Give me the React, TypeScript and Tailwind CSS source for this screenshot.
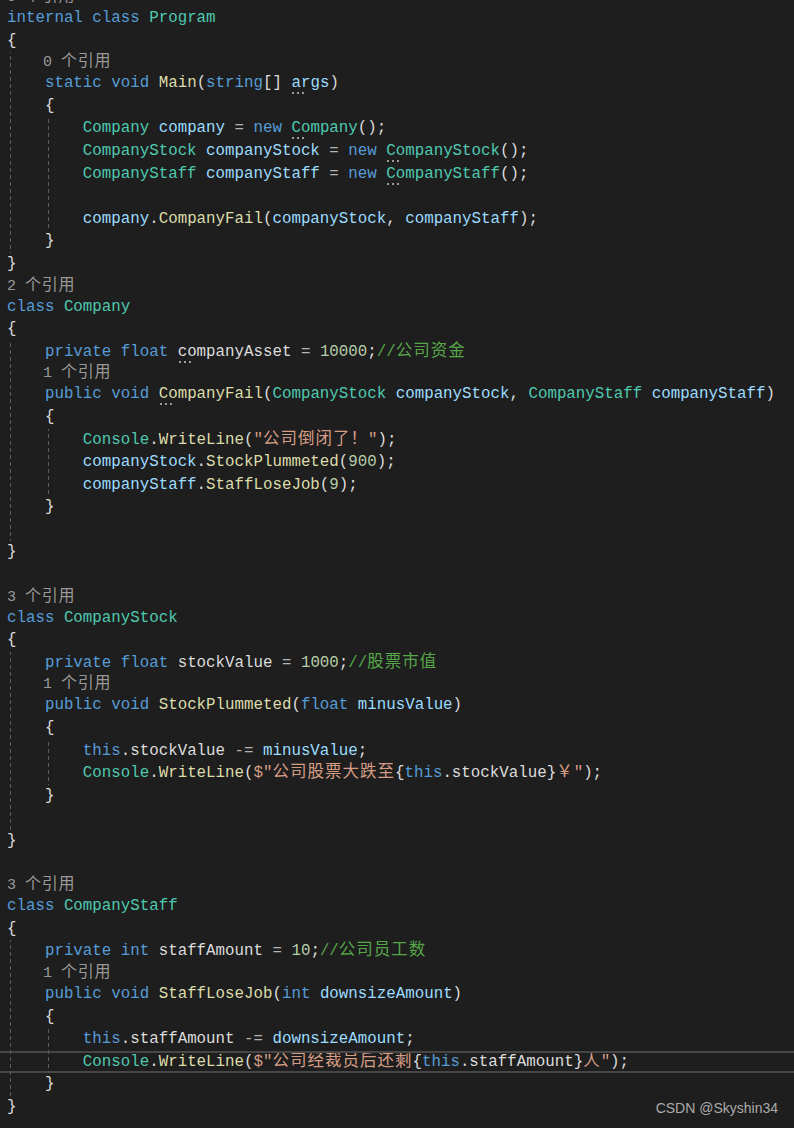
type Tok = [string, string, boolean?];

type Line = {
  lens?: string;
  g: number;
  t?: Tok[];
  hl?: boolean;
};

const color: Record<string, string> = {
  kw: "text-[#569cd6]",
  ty: "text-[#4ec9b0]",
  fn: "text-[#dcdcaa]",
  vr: "text-[#9cdcfe]",
  fd: "text-[#dcdcdc]",
  p: "text-[#dcdcdc]",
  op: "text-[#b4b4b4]",
  num: "text-[#b5cea8]",
  str: "text-[#d69d85]",
  cm: "text-[#57a64a]",
};

const guidePos = ["left-[10px]", "left-[48px]"];

const I1 = "    ";
const I2 = "        ";

const lines: Line[] = [
  { lens: "0 个引用", g: 0 },
  { g: 0, t: [["kw", "internal"], ["p", " "], ["kw", "class"], ["p", " "], ["ty", "Program"]] },
  { g: 0, t: [["p", "{"]] },
  { lens: I1 + "0 个引用", g: 1 },
  {
    g: 1,
    t: [["p", I1], ["kw", "static"], ["p", " "], ["kw", "void"], ["p", " "], ["fn", "Main"], ["p", "("], ["kw", "string"], ["p", "[] "], ["vr", "args", true], ["p", ")"]],
  },
  { g: 1, t: [["p", I1 + "{"]] },
  {
    g: 2,
    t: [["p", I2], ["ty", "Company"], ["p", " "], ["vr", "company"], ["op", " = "], ["kw", "new"], ["p", " "], ["ty", "Company", true], ["p", "();"]],
  },
  {
    g: 2,
    t: [["p", I2], ["ty", "CompanyStock"], ["p", " "], ["vr", "companyStock"], ["op", " = "], ["kw", "new"], ["p", " "], ["ty", "CompanyStock", true], ["p", "();"]],
  },
  {
    g: 2,
    t: [["p", I2], ["ty", "CompanyStaff"], ["p", " "], ["vr", "companyStaff"], ["op", " = "], ["kw", "new"], ["p", " "], ["ty", "CompanyStaff", true], ["p", "();"]],
  },
  { g: 2 },
  {
    g: 2,
    t: [["p", I2], ["vr", "company"], ["p", "."], ["fn", "CompanyFail"], ["p", "("], ["vr", "companyStock"], ["p", ", "], ["vr", "companyStaff"], ["p", ");"]],
  },
  { g: 1, t: [["p", I1 + "}"]] },
  { g: 0, t: [["p", "}"]] },
  { lens: "2 个引用", g: 0 },
  { g: 0, t: [["kw", "class"], ["p", " "], ["ty", "Company"]] },
  { g: 0, t: [["p", "{"]] },
  {
    g: 1,
    t: [["p", I1], ["kw", "private"], ["p", " "], ["kw", "float"], ["p", " "], ["fd", "companyAsset", true], ["op", " = "], ["num", "10000"], ["p", ";"], ["cm", "//公司资金"]],
  },
  { lens: I1 + "1 个引用", g: 1 },
  {
    g: 1,
    t: [
      ["p", I1], ["kw", "public"], ["p", " "], ["kw", "void"], ["p", " "], ["fn", "CompanyFail", true], ["p", "("],
      ["ty", "CompanyStock"], ["p", " "], ["vr", "companyStock"], ["p", ", "], ["ty", "CompanyStaff"], ["p", " "], ["vr", "companyStaff"], ["p", ")"],
    ],
  },
  { g: 1, t: [["p", I1 + "{"]] },
  { g: 2, t: [["p", I2], ["ty", "Console"], ["p", "."], ["fn", "WriteLine"], ["p", "("], ["str", "\"公司倒闭了！\""], ["p", ");"]] },
  { g: 2, t: [["p", I2], ["vr", "companyStock"], ["p", "."], ["fn", "StockPlummeted"], ["p", "("], ["num", "900"], ["p", ");"]] },
  { g: 2, t: [["p", I2], ["vr", "companyStaff"], ["p", "."], ["fn", "StaffLoseJob"], ["p", "("], ["num", "9"], ["p", ");"]] },
  { g: 1, t: [["p", I1 + "}"]] },
  { g: 1 },
  { g: 0, t: [["p", "}"]] },
  { g: 0 },
  { lens: "3 个引用", g: 0 },
  { g: 0, t: [["kw", "class"], ["p", " "], ["ty", "CompanyStock"]] },
  { g: 0, t: [["p", "{"]] },
  {
    g: 1,
    t: [["p", I1], ["kw", "private"], ["p", " "], ["kw", "float"], ["p", " "], ["fd", "stockValue"], ["op", " = "], ["num", "1000"], ["p", ";"], ["cm", "//股票市值"]],
  },
  { lens: I1 + "1 个引用", g: 1 },
  {
    g: 1,
    t: [["p", I1], ["kw", "public"], ["p", " "], ["kw", "void"], ["p", " "], ["fn", "StockPlummeted"], ["p", "("], ["kw", "float"], ["p", " "], ["vr", "minusValue"], ["p", ")"]],
  },
  { g: 1, t: [["p", I1 + "{"]] },
  { g: 2, t: [["p", I2], ["kw", "this"], ["p", "."], ["fd", "stockValue"], ["op", " -= "], ["vr", "minusValue"], ["p", ";"]] },
  {
    g: 2,
    t: [
      ["p", I2], ["ty", "Console"], ["p", "."], ["fn", "WriteLine"], ["p", "("], ["str", "$\"公司股票大跌至"],
      ["p", "{"], ["kw", "this"], ["p", "."], ["fd", "stockValue"], ["p", "}"], ["str", "￥\""], ["p", ");"],
    ],
  },
  { g: 1, t: [["p", I1 + "}"]] },
  { g: 1 },
  { g: 0, t: [["p", "}"]] },
  { g: 0 },
  { lens: "3 个引用", g: 0 },
  { g: 0, t: [["kw", "class"], ["p", " "], ["ty", "CompanyStaff"]] },
  { g: 0, t: [["p", "{"]] },
  {
    g: 1,
    t: [["p", I1], ["kw", "private"], ["p", " "], ["kw", "int"], ["p", " "], ["fd", "staffAmount"], ["op", " = "], ["num", "10"], ["p", ";"], ["cm", "//公司员工数"]],
  },
  { lens: I1 + "1 个引用", g: 1 },
  {
    g: 1,
    t: [["p", I1], ["kw", "public"], ["p", " "], ["kw", "void"], ["p", " "], ["fn", "StaffLoseJob"], ["p", "("], ["kw", "int"], ["p", " "], ["vr", "downsizeAmount"], ["p", ")"]],
  },
  { g: 1, t: [["p", I1 + "{"]] },
  { g: 2, t: [["p", I2], ["kw", "this"], ["p", "."], ["fd", "staffAmount"], ["op", " -= "], ["vr", "downsizeAmount"], ["p", ";"]] },
  {
    g: 2,
    hl: true,
    t: [
      ["p", I2], ["ty", "Console"], ["p", "."], ["fn", "WriteLine"], ["p", "("], ["str", "$\"公司经裁员后还剩"],
      ["p", "{"], ["kw", "this"], ["p", "."], ["fd", "staffAmount"], ["p", "}"], ["str", "人\""], ["p", ");"],
    ],
  },
  { g: 1, t: [["p", I1 + "}"]] },
  { g: 0, t: [["p", "}"]] },
];

// CJK glyphs get their own size and advance, a bit under two code cells
function Txt({ s, lens }: { s: string; lens?: boolean }) {
  const parts = s.split(/([\u3000-\u9fff\uff00-\uffef]+)/);
  return (
    <>
      {parts.map((part, i) =>
        i % 2 ? (
          <span key={i} className={lens ? "text-[16px] tracking-[0.7px]" : "text-[16.5px] tracking-[1px]"}>
            {part}
          </span>
        ) : (
          part
        )
      )}
    </>
  );
}

function Guides({ n }: { n: number }) {
  return (
    <>
      {guidePos.slice(0, n).map((pos) => (
        <span
          key={pos}
          className={`absolute top-0 bottom-0 w-px bg-fixed bg-[repeating-linear-gradient(to_bottom,#5c5c5c_0px,#5c5c5c_4px,transparent_4px,transparent_7px)] ${pos}`}
        />
      ))}
    </>
  );
}

function Dots() {
  return (
    <span className="absolute left-[1px] top-[20px] flex gap-[3px]">
      <span className="w-[2px] h-[2px] bg-[#9a9a9a]" />
      <span className="w-[2px] h-[2px] bg-[#9a9a9a]" />
      <span className="w-[2px] h-[2px] bg-[#9a9a9a]" />
    </span>
  );
}

function Row({ line }: { line: Line }) {
  if (line.lens !== undefined) {
    return (
      <div className="relative h-[20px] leading-[20px] text-[15px] text-[#999999] px-[7px] whitespace-pre">
        <Guides n={line.g} />
        <Txt s={line.lens} lens />
      </div>
    );
  }
  return (
    <div className="relative h-[22.6px] leading-[22.6px] text-[15.8px] px-[7px] whitespace-pre">
      {line.hl && <div className="absolute inset-0 border-y-2 border-[#464646]" />}
      <Guides n={line.g} />
      {(line.t ?? []).map(([kind, text, dots], i) =>
        dots ? (
          <span key={i} className={`relative inline-block ${color[kind]}`}>
            {text}
            <Dots />
          </span>
        ) : (
          <span key={i} className={color[kind]}>
            <Txt s={text} />
          </span>
        )
      )}
    </div>
  );
}

export default function App() {
  return (
    <div className="relative w-[794px] h-[1128px] overflow-hidden bg-[#1e1e1e] [font-family:'Liberation_Mono','Noto_Sans_CJK_SC',monospace]">
      <div className="-mt-[13px]">
        {lines.map((line, i) => (
          <Row key={i} line={line} />
        ))}
      </div>
      <div className="absolute right-[16px] bottom-[9px] text-[14px] text-[#ababab] [font-family:'Liberation_Sans',Arial,sans-serif]">
        CSDN @Skyshin34
      </div>
    </div>
  );
}
